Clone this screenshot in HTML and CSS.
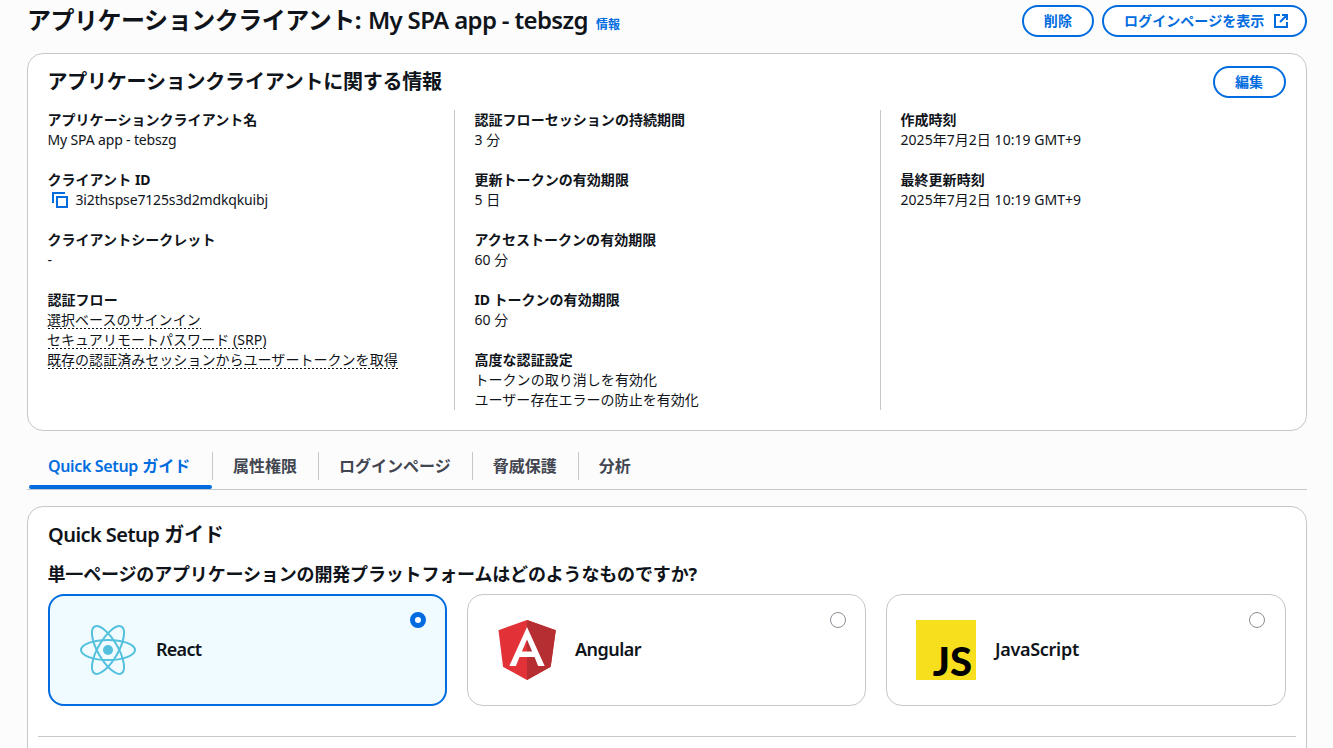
FILE: index.html
```html
<!DOCTYPE html>
<html lang="ja">
<head>
<meta charset="utf-8">
<title>My SPA app - tebszg</title>
<link rel="stylesheet" href="styles.css">
</head>
<body>
<main class="page">
  <header class="page-header">
    <h1 class="page-title">アプリケーションクライアント: <span class="latin-xl">My SPA app - tebszg</span><a class="info">情報</a></h1>
    <div class="actions">
      <button class="button">削除</button>
      <button class="button external">ログインページを表示
        <svg class="icon" viewBox="0 0 16 16"><path d="M7 2H2v12h12V9M9 2h5v5M14 2L7 9"/></svg>
      </button>
    </div>
  </header>

  <section class="panel details">
    <div class="panel-header">
      <h2 class="panel-title">アプリケーションクライアントに関する情報</h2>
      <button class="button edit">編集</button>
    </div>
    <div class="columns">
      <dl class="column">
        <div><dt>アプリケーションクライアント名</dt><dd><span class="latin">My SPA app - tebszg</span></dd></div>
        <div><dt>クライアント <span class="latin">ID</span></dt>
          <dd class="copy"><svg class="icon" viewBox="0 0 16 16"><path d="M1 11V1h12M5 5h10v10H5z"/></svg><span class="latin">3i2thspse7125s3d2mdkqkuibj</span></dd></div>
        <div><dt>クライアントシークレット</dt><dd>-</dd></div>
        <div><dt>認証フロー</dt>
          <dd><span class="hint">選択ベースのサインイン</span></dd>
          <dd><span class="hint">セキュアリモートパスワード (SRP)</span></dd>
          <dd><span class="hint">既存の認証済みセッションからユーザートークンを取得</span></dd></div>
      </dl>
      <dl class="column">
        <div><dt>認証フローセッションの持続期間</dt><dd>3 分</dd></div>
        <div><dt>更新トークンの有効期限</dt><dd>5 日</dd></div>
        <div><dt>アクセストークンの有効期限</dt><dd>60 分</dd></div>
        <div><dt><span class="latin">ID </span>トークンの有効期限</dt><dd>60 分</dd></div>
        <div><dt>高度な認証設定</dt><dd>トークンの取り消しを有効化</dd><dd>ユーザー存在エラーの防止を有効化</dd></div>
      </dl>
      <dl class="column">
        <div><dt>作成時刻</dt><dd>2025年7月2日 10:19 GMT+9</dd></div>
        <div><dt>最終更新時刻</dt><dd>2025年7月2日 10:19 GMT+9</dd></div>
      </dl>
    </div>
  </section>

  <nav class="tabs">
    <a class="tab active"><span><b class="latin-md">Quick Setup</b> ガイド</span></a>
    <a class="tab"><span>属性権限</span></a>
    <a class="tab"><span>ログインページ</span></a>
    <a class="tab"><span>脅威保護</span></a>
    <a class="tab"><span>分析</span></a>
  </nav>

  <section class="panel guide">
    <h2 class="panel-title"><span class="latin-lg">Quick Setup</span> ガイド</h2>
    <h3 class="question">単一ページのアプリケーションの開発プラットフォームはどのようなものですか?</h3>
    <div class="cards">
      <label class="card selected">
        <svg class="logo" viewBox="-30 -30 60 60"><g fill="none" stroke="#53c1de" stroke-width="2"><ellipse rx="27" ry="10"/><ellipse rx="27" ry="10" transform="rotate(60)"/><ellipse rx="27" ry="10" transform="rotate(120)"/></g><circle r="5" fill="#53c1de"/></svg>
        <span class="card-name react">React</span><span class="radio"></span>
      </label>
      <label class="card">
        <svg class="logo" viewBox="25 30 200 200"><path fill="#e23237" d="M125 30L30 64l15 122 80 44 79-44 17-122z"/><path fill="#b52e31" d="M125 30v200l79-44 17-122z"/><path fill="#fff" d="M125 53L66 183h22l12-30h50l12 30h22L125 53zm17 82h-34l17-40z"/></svg>
        <span class="card-name angular">Angular</span><span class="radio"></span>
      </label>
      <label class="card">
        <span class="logo js-logo">JS</span>
        <span class="card-name javascript">JavaScript</span><span class="radio"></span>
      </label>
    </div>
    <hr class="divider">
  </section>
</main>
</body>
</html>
```
FILE: styles.css
```css
* { box-sizing: border-box; }

html { height: 748px; overflow: hidden; }

body {
  margin: 0;
  height: 748px;
  overflow: hidden;
  background: #fcfcfd;
  color: #0f141a;
  font: 14px/20px "Noto Sans", "Noto Sans CJK JP", sans-serif;
}

h1, h2, h3, dl, dd { margin: 0; }
.page { height: 748px; overflow: hidden; padding: 5px 26px 0 27px; }

.latin { letter-spacing: -0.15px; }
.latin-md { font-weight: 600; letter-spacing: -0.35px; }
.latin-lg { font-weight: 600; letter-spacing: -0.55px; }
.latin-xl { margin-left: 1px; font-weight: 600; letter-spacing: -0.65px; }

.page-header { display: flex; justify-content: space-between; height: 48px; }
.page-title { font-size: 24px; line-height: 30px; letter-spacing: -0.48px; white-space: nowrap; }
.info { margin-left: 8px; color: #006ce0; font-size: 12px; letter-spacing: 0.06px; }
.actions { display: flex; gap: 8px; }

.button {
  display: flex;
  align-items: center;
  gap: 9px;
  height: 32px;
  padding: 0 20px 1px;
  border: 2px solid #006ce0;
  border-radius: 16px;
  background: #fff;
  color: #006ce0;
  font: bold 14px/20px "Noto Sans", "Noto Sans CJK JP", sans-serif;
  letter-spacing: 0.07px;
  white-space: nowrap;
}
.button.external { width: 205px; padding: 0 0 1px 20px; }
.button.edit { width: 73px; }

.icon { flex: none; width: 16px; height: 16px; fill: none; stroke: #006ce0; stroke-width: 2; }

.panel { border: 1px solid #c6c6cd; border-radius: 16px; background: #fff; }
.panel-title { font-size: 20px; line-height: 24px; letter-spacing: -0.22px; }

.details { height: 378px; padding: 12px 20px 20px; }
.panel-header { display: flex; align-items: center; justify-content: space-between; height: 32px; margin-bottom: 12px; }
.details .panel-title, .details .column > div, .question { text-indent: -0.5px; }

.columns { display: grid; grid-template-columns: 406px 426px 406px; height: 300px; }
.column { display: flex; flex-direction: column; gap: 20px; letter-spacing: 0.04px; white-space: nowrap; }
.column + .column { padding-left: 20px; border-left: 1px solid #c6c6cd; }
dt { font-weight: bold; }
dt, dd { height: 20px; }
.copy { display: flex; align-items: center; gap: 8px; padding-left: 4px; }
.hint {
  display: inline-block;
  height: 19px;
  line-height: 20px;
  background: repeating-linear-gradient(90deg, #0f141a 0 2px, transparent 2px 4px) left bottom / 100% 1px no-repeat;
}

.tabs { display: flex; height: 59px; padding-top: 21px; border-bottom: 1px solid #c6c6cd; }
.tab { padding-bottom: 9px; color: #424650; font-size: 16px; font-weight: bold; }
.tab span { display: block; height: 28px; padding: 0 21px 0 20px; border-right: 1px solid #c6c6cd; line-height: 28px; white-space: nowrap; }
.tab:last-child span { border: 0; }
.tab.active { width: 186px; color: #006ce0; position: relative; }
.tab.active span { padding: 0 0 0 21px; }
.tab.active::after {
  content: "";
  position: absolute;
  left: 2px;
  right: 1px;
  bottom: 0;
  height: 4px;
  border-radius: 2px;
  background: #006ce0;
}

.guide { height: 300px; margin-top: 16px; padding: 16px 10px 0; }
.guide .panel-title, .question, .cards { margin-left: 10px; margin-right: 10px; }
.question { margin-top: 15px; font-size: 18px; line-height: 24px; letter-spacing: -0.16px; }
.cards { display: grid; grid-template-columns: 399px 399px 400px; gap: 20px; margin-top: 8px; }
.card { position: relative; display: flex; align-items: center; gap: 18px; height: 112px; padding-left: 29px; border: 1px solid #c6c6cd; border-radius: 16px; }
.card.selected { padding-left: 28px; border: 2px solid #006ce0; background: #f0fbff; }
.logo { width: 60px; height: 60px; }
.js-logo { padding: 21px 4px 0 0; background: #f7df1e; color: #000; font: 900 40px/40px Lato, sans-serif; text-align: right; }
.card-name { padding-bottom: 2px; font-size: 18px; font-weight: 600; }
.react { letter-spacing: -0.75px; }
.angular { letter-spacing: -0.55px; }
.javascript { padding-left: 1px; letter-spacing: -0.3px; }
.radio { position: absolute; top: 17px; right: 19px; width: 16px; height: 16px; border: 1px solid #8c8c94; border-radius: 50%; background: #fff; }
.card:last-child .radio { right: 20px; }
.selected .radio { top: 16px; border: 5px solid #006ce0; }
.divider { height: 1px; margin: 30px 0 0; border: 0; background: #c6c6cd; }
```
